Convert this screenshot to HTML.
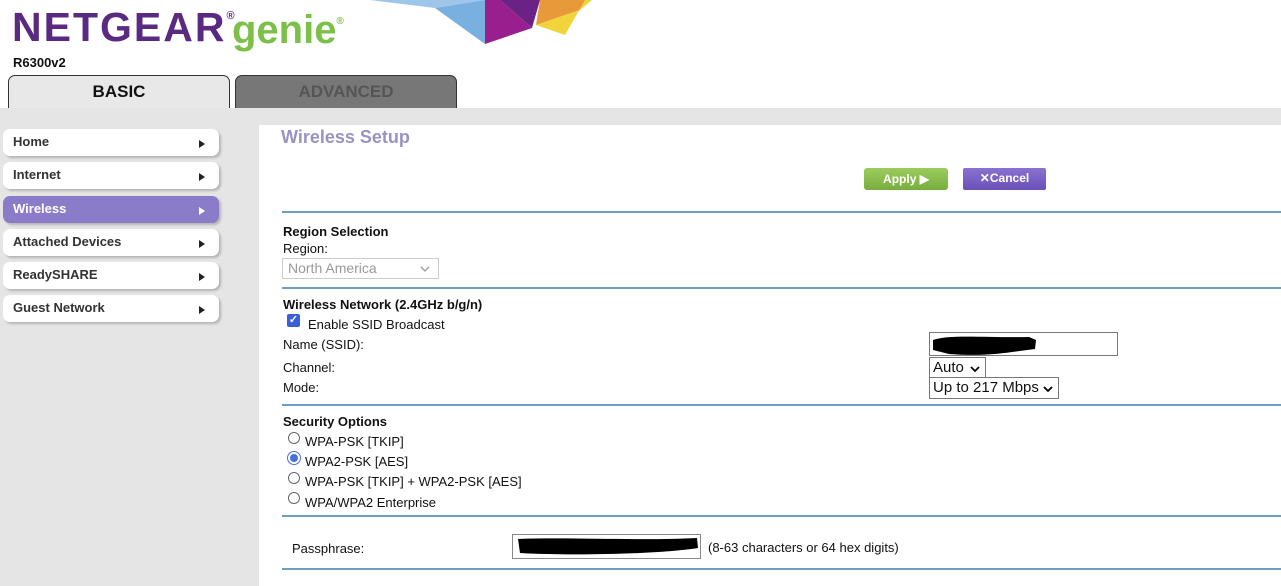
<!DOCTYPE html>
<html><head><meta charset="utf-8"><style>
*{margin:0;padding:0;box-sizing:border-box}
body{width:1281px;height:586px;position:relative;background:#fff;font-family:"Liberation Sans",Arial,sans-serif;overflow:hidden;color:#111}
.a{position:absolute;white-space:nowrap}
.logo{left:12px;top:4px;font-size:41px;font-weight:bold;color:#5a2a82;letter-spacing:2px}
.genie{left:232px;top:8px;font-size:40px;font-weight:bold;color:#7cc04a}
.tab{top:75px;width:222px;height:34px;border:1px solid #333;border-bottom:none;border-radius:7px 7px 0 0;text-align:center;font-weight:bold;font-size:17px;padding-top:6px}
.bar{left:0;top:108px;width:1281px;height:17px;background:#e5e5e5}
.side{left:0;top:125px;width:259px;height:461px;background:#e5e5e5}
.mi{left:3px;width:216px;height:27px;background:#fff;border-radius:7px;box-shadow:2px 2px 2px #b5b5b5;font-size:13px;font-weight:bold;color:#333;padding:5px 0 0 10px}
.mi:after{content:"";position:absolute;right:14px;top:11px;border-left:6px solid #222;border-top:4px solid transparent;border-bottom:4px solid transparent}
.mi.on{background:#8a7cc8;color:#fff}
.mi.on:after{border-left-color:#fff}
.hr{left:282px;width:999px;height:2px;background:#6b9fc4}
.t{font-size:13px}
.b{font-weight:bold}
.sel{border:1px solid #777;background:#fff;font-size:15px;padding:0 3px;height:22px;line-height:20px}
.rad{width:12px;height:12px;border:1px solid #666;border-radius:50%;background:#fff}
</style></head><body>
<svg class="a" style="left:0;top:0" width="620" height="60">
<polygon points="370,0 485,0 435,8" fill="#9ec5ea"/>
<polygon points="435,8 485,0 485,44" fill="#7ab0e0"/>
<polygon points="485,0 500,0 532,28 485,44" fill="#9a1f8e"/>
<polygon points="500,0 540,0 532,28" fill="#6a2384"/>
<polygon points="540,0 585,0 580,10 536,25" fill="#e89a3a"/>
<polygon points="536,25 580,10 592,0 585,0 565,35" fill="#f1d43a"/>
</svg>
<div class="a logo">NETGEAR<sup style="font-size:11px;vertical-align:top;position:relative;top:6px">®</sup></div>
<div class="a genie">genie<sup style="font-size:10px;vertical-align:top;position:relative;top:8px">®</sup></div>
<div class="a b" style="left:13px;top:55px;font-size:13px">R6300v2</div>
<div class="a tab" style="left:8px;background:#e8e8e8;color:#111">BASIC</div>
<div class="a tab" style="left:235px;background:#777;color:#555">ADVANCED</div>
<div class="a bar"></div>
<div class="a side"></div>
<div class="a mi" style="top:129px">Home</div>
<div class="a mi" style="top:162px">Internet</div>
<div class="a mi on" style="top:196px">Wireless</div>
<div class="a mi" style="top:229px">Attached Devices</div>
<div class="a mi" style="top:262px">ReadySHARE</div>
<div class="a mi" style="top:295px">Guest Network</div>
<div class="a b" style="left:281px;top:127px;font-size:18px;color:#9a92c2">Wireless Setup</div>
<div class="a b" style="left:864px;top:168px;width:84px;height:22px;background:linear-gradient(#9ccc5e,#78ae3e);border-radius:3px;color:#fff;font-size:12px;text-align:center;line-height:22px">Apply ▶</div>
<div class="a b" style="left:963px;top:168px;width:83px;height:22px;background:linear-gradient(#8a72d0,#6a50b8);border-radius:2px;color:#fff;font-size:12px;text-align:center;line-height:21px">✕Cancel</div>
<div class="a hr" style="top:211px"></div>
<div class="a t b" style="left:283px;top:224px">Region Selection</div>
<div class="a t" style="left:283px;top:241px">Region:</div>
<div class="a" style="left:282px;top:258px;width:157px;height:21px;border:1px solid #ccc;color:#999;font-size:14px;padding:1px 5px">North America<svg style="position:absolute;right:8px;top:7px" width="10" height="6"><path d="M1,1 L5,5 L9,1" stroke="#999" fill="none" stroke-width="1.3"/></svg></div>
<div class="a hr" style="top:287px"></div>
<div class="a t b" style="left:283px;top:297px">Wireless Network (2.4GHz b/g/n)</div>
<div class="a" style="left:287px;top:314px;width:13px;height:13px;background:#3b5fd8;border-radius:2px;color:#fff;font-size:11px;line-height:13px;text-align:center;font-weight:bold">✓</div>
<div class="a t" style="left:308px;top:317px">Enable SSID Broadcast</div>
<div class="a t" style="left:283px;top:337px">Name (SSID):</div>
<div class="a t" style="left:283px;top:360px">Channel:</div>
<div class="a t" style="left:283px;top:380px">Mode:</div>
<div class="a" style="left:929px;top:332px;width:189px;height:24px;border:1px solid #777;background:#fff"></div>
<svg class="a" style="left:929px;top:332px" width="120" height="30"><path d="M4,8 C20,2 60,6 100,5 L107,8 L106,17 C80,20 60,25 20,22 L4,18Z" fill="#000"/></svg>
<div class="a sel" style="left:929px;top:357px;width:57px">Auto<svg style="position:absolute;right:5px;top:8px" width="10" height="7"><path d="M1,1 L5,5 L9,1" stroke="#000" fill="none" stroke-width="1.8"/></svg></div>
<div class="a sel" style="left:929px;top:377px;width:130px">Up to 217 Mbps<svg style="position:absolute;right:5px;top:8px" width="10" height="7"><path d="M1,1 L5,5 L9,1" stroke="#000" fill="none" stroke-width="1.8"/></svg></div>
<div class="a hr" style="top:404px"></div>
<div class="a t b" style="left:283px;top:414px">Security Options</div>
<div class="a rad" style="left:288px;top:432px"></div><div class="a t" style="left:305px;top:434px">WPA-PSK [TKIP]</div>
<div class="a rad" style="left:288px;top:452px;border:2px solid #fff;background:#4a6ee0;box-shadow:0 0 0 1px #4a6ee0"></div><div class="a t" style="left:305px;top:454px">WPA2-PSK [AES]</div>
<div class="a rad" style="left:288px;top:472px"></div><div class="a t" style="left:305px;top:474px">WPA-PSK [TKIP] + WPA2-PSK [AES]</div>
<div class="a rad" style="left:288px;top:492px"></div><div class="a t" style="left:305px;top:495px">WPA/WPA2 Enterprise</div>
<div class="a hr" style="top:515px"></div>
<div class="a t" style="left:292px;top:541px">Passphrase:</div>
<div class="a" style="left:512px;top:534px;width:189px;height:25px;border:1px solid #888;background:#fff"></div>
<svg class="a" style="left:512px;top:534px" width="189" height="25"><path d="M6,5 C60,3 130,7 185,4 L186,14 C150,20 60,22 8,19Z" fill="#000"/></svg>
<div class="a t" style="left:708px;top:540px">(8-63 characters or 64 hex digits)</div>
<div class="a hr" style="top:568px"></div>
</body></html>
